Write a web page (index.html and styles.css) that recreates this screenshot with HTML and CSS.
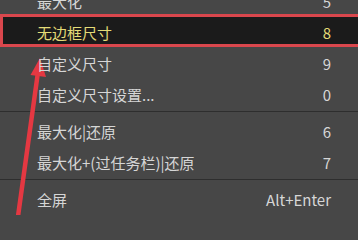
FILE: index.html
```html
<!DOCTYPE html>
<html lang="zh">
<head>
<meta charset="utf-8">
<link rel="stylesheet" href="styles.css">
</head>
<body>
<div class="screen">
  <div class="menu">
    <div class="item"><span class="label">最大化</span><span class="key">5</span></div>
    <div class="item active"><span class="label">无边框尺寸</span><span class="key">8</span></div>
    <div class="item"><span class="label">自定义尺寸</span><span class="key">9</span></div>
    <div class="item"><span class="label">自定义尺寸设置...</span><span class="key">0</span></div>
    <div class="sep"></div>
    <div class="item"><span class="label">最大化|还原</span><span class="key">6</span></div>
    <div class="item"><span class="label">最大化+(过任务栏)|还原</span><span class="key">7</span></div>
    <div class="sep"></div>
    <div class="item"><span class="label">全屏</span><span class="key">Alt+Enter</span></div>
  </div>
  <svg class="arrow" width="358" height="215" viewBox="0 0 358 215">
    <line x1="17.5" y1="220" x2="38" y2="72" stroke="#e53842" stroke-width="4.5" stroke-linecap="round"/>
    <polygon points="40,58 30.5,75 46,77" fill="#e53842"/>
  </svg>
</div>
</body>
</html>
```
FILE: styles.css
```css
html, body {
  margin: 0;
  padding: 0;
  background: #474747;
  overflow: hidden;
}
.screen {
  width: 358px;
  height: 215px;
  position: relative;
  overflow: hidden;
  font-family: "Noto Sans CJK SC", "Noto Sans", sans-serif;
  font-size: 15px;
  color: #d6d6d6;
}
.menu {
  margin-top: -14px;
  display: flex;
  flex-direction: column;
}
.item {
  height: 31px;
  display: flex;
  align-items: center;
  justify-content: space-between;
  padding: 0 27px 0 37px;
  position: relative;
}
.label, .key {
  position: relative;
  z-index: 1;
}
.active {
  color: #e4dc78;
}
.active::before {
  content: "";
  position: absolute;
  left: 0;
  right: -20px;
  top: -3px;
  bottom: 1px;
  border: 3px solid #da474d;
  background: #1b1b1b;
  z-index: 0;
}
.sep {
  height: 1px;
  background: #2e2e2e;
  margin: 1px 0 4px;
}
.arrow {
  position: absolute;
  left: 0;
  top: 0;
  pointer-events: none;
}
```
